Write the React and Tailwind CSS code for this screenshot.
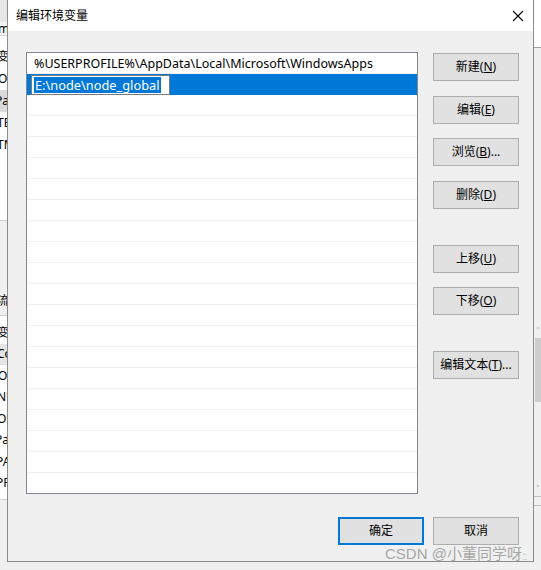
import React from "react";

const F = "font-['Noto_Sans','Noto_Sans_CJK_SC',sans-serif]";

function Btn({ children, primary }) {
  return (
    <div
      className={
        "w-[86px] h-[28px] flex items-center justify-center bg-[#e1e1e1] text-[12px] text-black " +
        (primary ? "border-2 border-[#0078d7]" : "border border-[#adadad]")
      }
    >
      {children}
    </div>
  );
}

function Cut({ t }) {
  const ml = {
    变: "-ml-[3px]",
    Or: "-ml-[2px]",
    Pa: "-ml-[5px]",
    TE: "-ml-[3px]",
    TM: "-ml-[3px]",
    Co: "-ml-[3px]",
    NU: "-ml-[3px]",
    OS: "-ml-[3px]",
    PA: "-ml-[4px]",
    PR: "-ml-[4px]",
  }[t];
  return <span className={"whitespace-nowrap " + ml}>{t}</span>;
}

function LeftStrip() {
  const top = ["变", "Or", "Pa", "TE", "TM"];
  const bottom = ["变", "Co", "Or", "NU", "OS", "Pa", "PA", "PR"];
  return (
    <div className="absolute left-0 top-0 w-[8px] h-[570px] overflow-hidden bg-white text-[12px] text-black leading-none">
      <div className="h-[22px] bg-[#e6e6e6]" />
      <div className="h-[14px] bg-[#f3f3f3] border-b border-[#d5d5d5] flex items-end">
        <span className="-ml-[2px]">m</span>
      </div>
      <div className="h-[10px]" />
      {top.map((t, i) => (
        <div
          key={i}
          className={"h-[22px] flex items-center " + (t === "Pa" ? "bg-[#d9d9d9]" : "")}
        >
          <Cut t={t} />
        </div>
      ))}
      <div className="h-[64px]" />
      <div className="h-[96px] bg-[#f0f0f0] border-t border-[#d0d0d0] border-b flex items-end pb-[8px]">
        <span className="-ml-[3px]">流</span>
      </div>
      <div className="h-[6px]" />
      {bottom.map((t, i) => (
        <div
          key={i}
          className={"h-[21.5px] flex items-center " + (t === "Co" ? "bg-[#e5e5e5]" : "")}
        >
          <Cut t={t} />
        </div>
      ))}
      <div className="h-[6px] border-b border-[#d0d0d0]" />
      <div className="h-[80px] bg-[#f0f0f0]" />
    </div>
  );
}

function RightStrip() {
  return (
    <div className="absolute left-[534px] top-0 w-[7px] h-[570px] overflow-hidden bg-[#f0f0f0]">
      <div className="h-[48px] bg-white border-b border-[#a0a0a0]" />
      <div className="h-[276px]" />
      <div className="ml-[1px] w-[6px] h-[172px] bg-[#f0f0f0] flex flex-col items-center">
        <div className="text-[8px] leading-[14px] text-[#606060]">˄</div>
        <div className="w-full h-[64px] bg-[#cdcdcd]" />
        <div className="flex-1" />
        <div className="text-[8px] leading-[14px] text-[#606060]">˅</div>
      </div>
      <div className="h-[10px] border-t border-[#c0c0c0] border-b" />
    </div>
  );
}

export default function App() {
  const rows = Array.from({ length: 19 });
  return (
    <div className={"relative w-[541px] h-[570px] overflow-hidden bg-[#f0f0f0] " + F}>
      <LeftStrip />
      <RightStrip />

      <div className="absolute left-[7px] top-0 w-[527px] h-[562px] border-x border-b border-[#8c8c8c] bg-[#f0f0f0] flex flex-col">
        {/* title bar */}
        <div className="h-[31px] bg-white flex items-center justify-between pl-[8px] pr-[9px]">
          <span className="text-[12px] text-black">编辑环境变量</span>
          <svg width="12" height="12" viewBox="0 0 12 12">
            <path d="M1 1 L11 11 M11 1 L1 11" stroke="#000" strokeWidth="1.1" fill="none" />
          </svg>
        </div>

        {/* body */}
        <div className="flex pl-[18px] pt-[21px]">
          <div className="w-[392px] h-[442px] border border-[#828790] bg-white overflow-hidden text-[12.5px] text-black">
            <div className="h-[21px] border-b border-[#f0f0f0] flex items-center pl-[7px] pt-[2px] whitespace-nowrap">
              %USERPROFILE%\AppData\Local\Microsoft\WindowsApps
            </div>
            <div className="h-[21px] bg-[#0078d7] flex items-center pl-[4px] pt-px">
              <div className="w-[139px] h-[20px] border border-[#7a7a7a] bg-white flex items-center pl-[2px]">
                <span className="bg-[#0078d7] text-white leading-[16px] px-px text-[12.8px]">E:\node\node_global</span>
              </div>
            </div>
            {rows.map((_, i) => (
              <div key={i} className="h-[21px] border-b border-[#f0f0f0]" />
            ))}
          </div>

          <div className="ml-[15px] mt-[1px] flex flex-col">
            <Btn>
              新建(<u>N</u>)
            </Btn>
            <div className="h-[15px]" />
            <Btn>
              编辑(<u>E</u>)
            </Btn>
            <div className="h-[14px]" />
            <Btn>
              浏览(<u>B</u>)...
            </Btn>
            <div className="h-[15px]" />
            <Btn>
              删除(<u>D</u>)
            </Btn>
            <div className="h-[36px]" />
            <Btn>
              上移(<u>U</u>)
            </Btn>
            <div className="h-[14px]" />
            <Btn>
              下移(<u>O</u>)
            </Btn>
            <div className="h-[36px]" />
            <Btn>
              编辑文本(<u>T</u>)...
            </Btn>
          </div>
        </div>

        {/* footer */}
        <div className="flex justify-end gap-[9px] pr-[14px] mt-[23px]">
          <Btn primary>确定</Btn>
          <Btn>取消</Btn>
        </div>
      </div>

      {/* watermark */}
      <div className="absolute left-[385px] top-[544px] text-[15px] leading-[19px] text-[#a0a0a0] opacity-90 font-['Liberation_Sans','Noto_Sans_CJK_SC',sans-serif] flex items-end">
        <span>CSDN @小董同学呀</span>
        <span className="text-[8px] leading-[10px] ml-px text-[#a0a0a0]">⁚⁚</span>
      </div>
    </div>
  );
}
